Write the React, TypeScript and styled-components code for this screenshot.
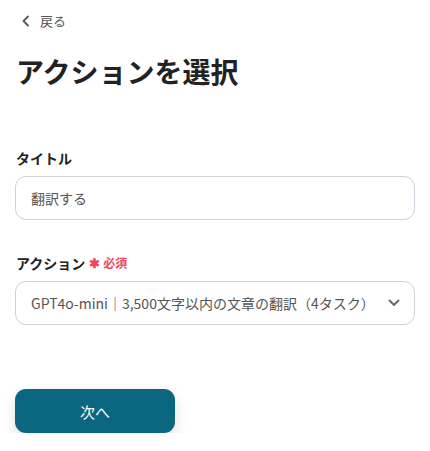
import React from 'react';
import styled, {createGlobalStyle} from "styled-components";

const GlobalStyle = createGlobalStyle`
  * { box-sizing: border-box; }
  body {
    margin: 0;
    background: #FFFFFF;
    font-family: "Noto Sans CJK JP", "Noto Sans", sans-serif;
    color: #222222;
  }
`

export default function App() {
    return (
        <>
            <GlobalStyle/>
            <Page>
                <BackLink>
                    <svg width="10" height="12" viewBox="0 0 10 12">
                        <path d="M7 1.5 L2.5 6 L7 10.5" fill="none" stroke="#555" strokeWidth="1.8" strokeLinecap="round" strokeLinejoin="round"/>
                    </svg>
                    戻る
                </BackLink>
                <PageTitle>アクションを選択</PageTitle>

                <Field margin={'57px 0 0 0'}>
                    <Label>タイトル</Label>
                    <Box>翻訳する</Box>
                </Field>

                <Field margin={'33px 0 0 0'}>
                    <Label>
                        アクション
                        <Required><Star>✱</Star>必須</Required>
                    </Label>
                    <Box>
                        GPT4o-mini｜3,500文字以内の文章の翻訳（4タスク）
                        <svg width="12" height="8" viewBox="0 0 12 8">
                            <path d="M1.5 1.5 L6 6 L10.5 1.5" fill="none" stroke="#666" strokeWidth="1.8" strokeLinecap="round" strokeLinejoin="round"/>
                        </svg>
                    </Box>
                </Field>

                <NextButton>次へ</NextButton>
            </Page>
        </>
    );
}

const Page = styled.div`
  display: flex;
  flex-direction: column;
  padding: 11px 15px 0 15px;
  width: 430px;
`

const BackLink = styled.div`
  display: flex;
  align-items: center;
  gap: 9px;
  padding-left: 6px;
  font-size: 13px;
  line-height: 20px;
  color: #555555;
`

const PageTitle = styled.h1`
  margin: 20px 0 0 1px;
  font-size: 28px;
  line-height: 40px;
  font-weight: 700;
  color: #222222;
`

const Field = styled.div<{ margin: string }>`
  display: flex;
  flex-direction: column;
  gap: 8px;
  margin: ${p => p.margin};
`

const Label = styled.div`
  display: flex;
  align-items: center;
  padding-left: 1px;
  font-size: 14px;
  line-height: 20px;
  font-weight: 700;
  color: #222222;
`

const Required = styled.span`
  display: flex;
  align-items: center;
  margin-left: 4px;
  font-size: 12px;
  font-weight: 700;
  color: #f0455a;
`

const Star = styled.span`
  font-size: 13px;
  margin-right: 3px;
`

const Box = styled.div`
  display: flex;
  align-items: center;
  justify-content: space-between;
  height: 44px;
  padding: 0 14px 0 15px;
  border: 1px solid #ccd2da;
  border-radius: 11px;
  font-size: 14px;
  color: #555555;
  background: #FFFFFF;
`

const NextButton = styled.button`
  margin-top: 64px;
  width: 160px;
  height: 44px;
  border: none;
  border-radius: 11px;
  background: #0b6680;
  color: #FFFFFF;
  font-family: "Noto Sans CJK JP", sans-serif;
  font-size: 15px;
  box-shadow: 0 6px 14px rgba(0, 0, 0, 0.12);
`
